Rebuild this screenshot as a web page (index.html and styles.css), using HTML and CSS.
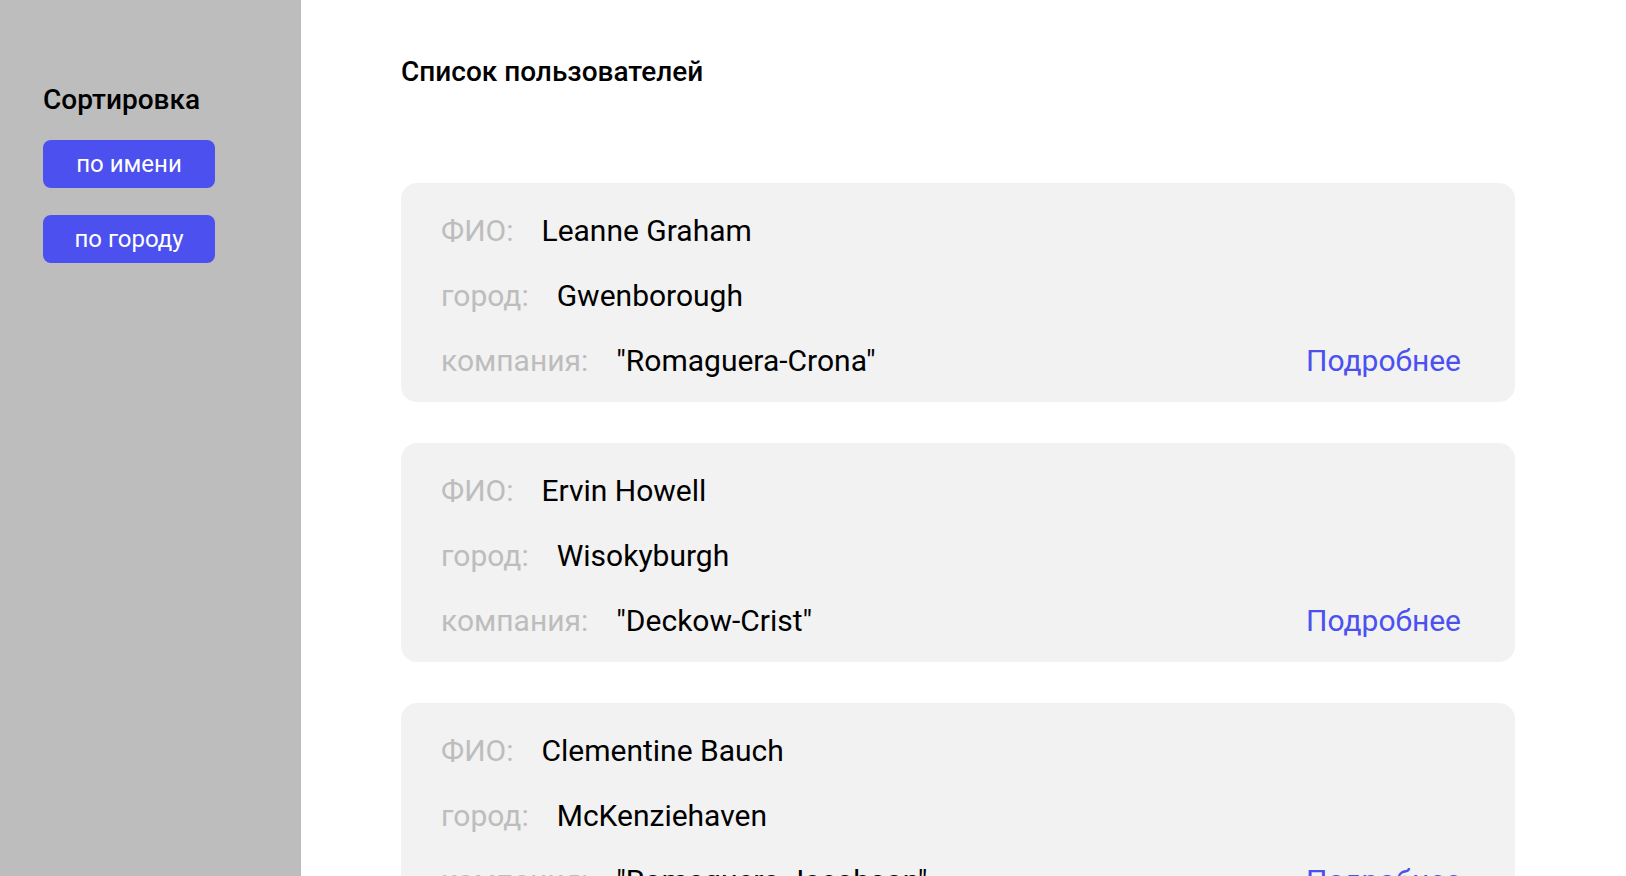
FILE: index.html
```html
<!DOCTYPE html>
<html lang="ru">
<head>
<meta charset="utf-8">
<title>Список пользователей</title>
<link rel="stylesheet" href="styles.css">
</head>
<body>
<div class="layout">
  <aside class="sidebar">
    <h2 class="sidebar-title">Сортировка</h2>
    <button class="sort-btn">по имени</button>
    <button class="sort-btn">по городу</button>
  </aside>
  <main class="main">
    <h1 class="page-title">Список пользователей</h1>
    <div class="list">
      <div class="card">
        <div class="row"><span class="label">ФИО:</span><span class="value">Leanne Graham</span></div>
        <div class="row"><span class="label">город:</span><span class="value">Gwenborough</span></div>
        <div class="row last"><span class="label">компания:</span><span class="value">"Romaguera-Crona"</span><a class="more" href="#">Подробнее</a></div>
      </div>
      <div class="card">
        <div class="row"><span class="label">ФИО:</span><span class="value">Ervin Howell</span></div>
        <div class="row"><span class="label">город:</span><span class="value">Wisokyburgh</span></div>
        <div class="row last"><span class="label">компания:</span><span class="value">"Deckow-Crist"</span><a class="more" href="#">Подробнее</a></div>
      </div>
      <div class="card">
        <div class="row"><span class="label">ФИО:</span><span class="value">Clementine Bauch</span></div>
        <div class="row"><span class="label">город:</span><span class="value">McKenziehaven</span></div>
        <div class="row last"><span class="label">компания:</span><span class="value">"Romaguera-Jacobson"</span><a class="more" href="#">Подробнее</a></div>
      </div>
    </div>
  </main>
</div>
</body>
</html>
```
FILE: styles.css
```css
* { box-sizing: border-box; }
html, body { margin: 0; padding: 0; height: 100%; overflow: hidden; }
body {
  font-family: Roboto, "Noto Sans", sans-serif;
  color: #000;
  background: #fff;
}
.layout {
  display: flex;
  height: 100vh;
}
.sidebar {
  width: 301px;
  flex: 0 0 301px;
  background: #bdbdbd;
  padding: 83px 0 0 43px;
  display: flex;
  flex-direction: column;
  align-items: flex-start;
}
.sidebar-title {
  margin: 0 0 24px 0;
  font-size: 28px;
  font-weight: 500;
  line-height: 33px;
}
.sort-btn {
  width: 172px;
  height: 48px;
  border: none;
  border-radius: 8px;
  background: #4b50ef;
  color: #fff;
  font-family: Roboto, "Noto Sans", sans-serif;
  font-size: 24px;
  font-weight: 400;
  padding: 0;
  margin-bottom: 27px;
  cursor: pointer;
}
.main {
  flex: 1;
  padding: 55px 111px 0 100px;
  overflow: hidden;
}
.page-title {
  margin: 0 0 95px 0;
  font-size: 28px;
  font-weight: 500;
  line-height: 33px;
}
.list {
  display: flex;
  flex-direction: column;
  gap: 41px;
}
.card {
  background: #f2f2f2;
  border-radius: 16px;
  padding: 30px 54px 24px 40px;
  display: flex;
  flex-direction: column;
  gap: 30px;
}
.row {
  display: flex;
  align-items: baseline;
  font-size: 30px;
  line-height: 35px;
}
.label {
  color: #bdbdbd;
  margin-right: 28px;
}
.value { color: #000; }
.more {
  margin-left: auto;
  color: #4b50ef;
  text-decoration: none;
}
```
